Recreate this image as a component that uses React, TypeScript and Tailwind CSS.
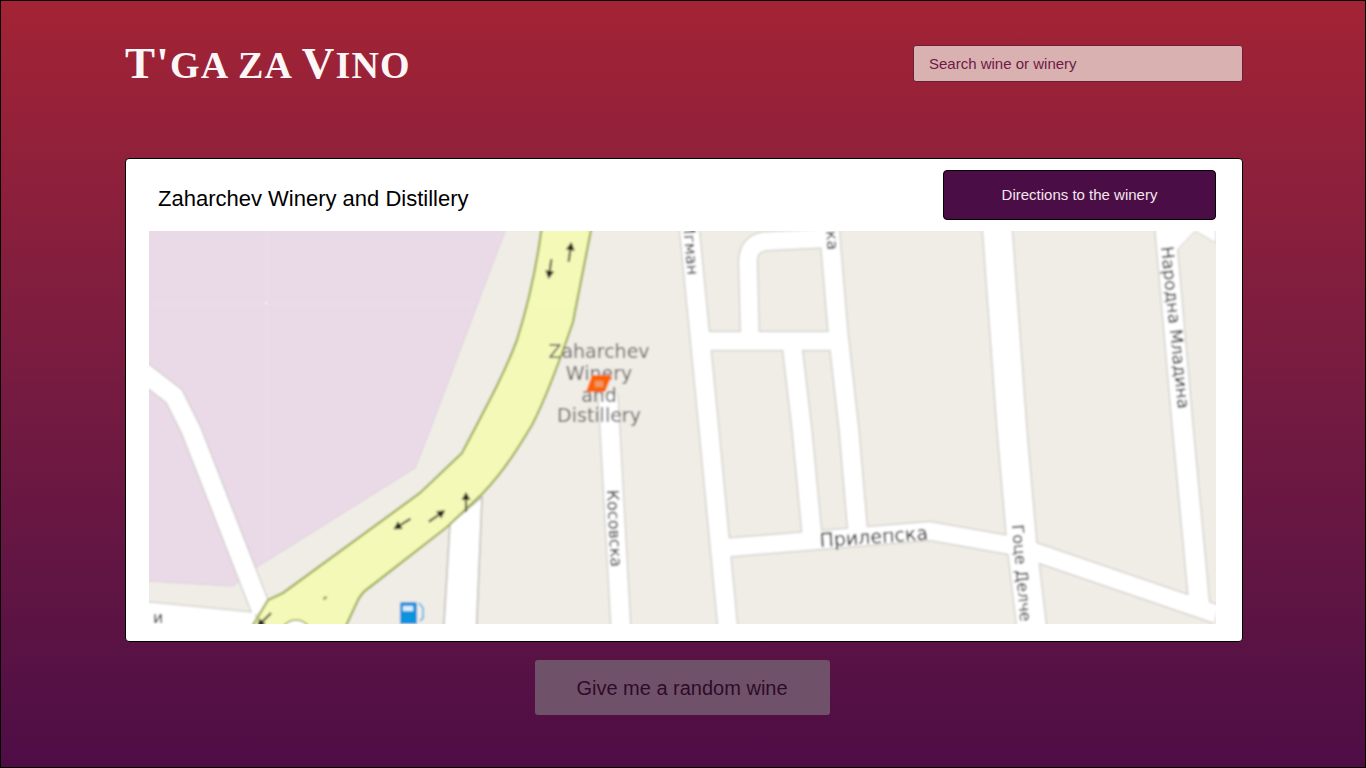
const mapFont = '"DejaVu Sans", sans-serif';

function Road({ d, w }: { d: string; w: number }) {
  return <path d={d} fill="none" stroke="#c4c2bd" strokeWidth={w + 2} strokeLinejoin="round" />;
}

function RoadFill({ d, w }: { d: string; w: number }) {
  return <path d={d} fill="none" stroke="#ffffff" strokeWidth={w} strokeLinejoin="round" />;
}

function Arrow({ x, y, angle }: { x: number; y: number; angle: number }) {
  // points up by default, rotated round its middle
  return (
    <g transform={`translate(${x} ${y}) rotate(${angle})`}>
      <path d="M0 10 L0 -3" stroke="#55593a" strokeWidth={2.2} fill="none" />
      <path d="M-4.5 -2 L0 -10 L4.5 -2 Z" fill="#26281a" />
    </g>
  );
}

const roads: { d: string; w: number }[] = [
  { d: 'M135 366 L174 396 L191 430 L262 612', w: 19 },
  { d: 'M608 395 L610 430 L621 630', w: 19 },
  { d: 'M689 225 L709 430 L728 630', w: 19 },
  { d: 'M705 341 L845 341', w: 18 },
  { d: 'M750 341 L748 262 Q748 241 770 241 L832 238', w: 18 },
  { d: 'M829 225 L838 332 L849 430 L858 535', w: 19 },
  { d: 'M792 345 L802 430 L812 535', w: 19 },
  { d: 'M722 548 L930 531 L1020 547 L1216 614', w: 18 },
  { d: 'M997 225 L1012 430 L1022 545 L1032 630', w: 29 },
  { d: 'M1165 225 L1183 430 L1200 612', w: 20 },
];

function WineryMap() {
  return (
    <svg viewBox="149 231 1067 393" className="block w-full h-[393px]">
      <defs>
        <filter id="tile" x="-2%" y="-2%" width="104%" height="104%">
          <feGaussianBlur stdDeviation="0.85" />
        </filter>
      </defs>
      <g filter="url(#tile)">
        <rect x="130" y="215" width="1110" height="425" fill="#f0ede6" />
        <path d="M130 215 L511 215 L428 435 L415 468 L257 567 L233 586 L130 580 Z" fill="#eadae8" stroke="#dccfd8" />

        {roads.map((r) => <Road key={r.d} d={r.d} w={r.w} />)}
        <path d="M130 600 L252 612 L275 640 L130 640 Z" fill="#ffffff" stroke="#c4c2bd" />
        <path d="M450 524 L482 497 L476 640 L443 640 Z" fill="#ffffff" stroke="#bdbbb6" strokeWidth={1.5} />
        <path d="M1177 250 L1195 231 L1216 243 L1216 215 L1160 215 Z" fill="#ffffff" stroke="#cfcdc8" />
        {roads.map((r) => <RoadFill key={r.d} d={r.d} w={r.w} />)}

        {/* primary road */}
        <path
          d="M542 225 C537 265 528 305 517 340 C505 372 490 400 462 453 L420 493 L283 593 L268 600 L250 630 L344 630 L358 600 C362 592 366 590 370 587 L447 527 L483 493 C505 470 520 445 532 425 C545 400 560 360 573 322 L592 225 Z"
          fill="#f5f9b8"
          stroke="#9aab4e"
          strokeWidth={2.2}
        />
        <ellipse cx="296" cy="634" rx="15" ry="14" fill="#ffffff" stroke="#9aab4e" strokeWidth={1.5} />

        <Arrow x={570} y={252} angle={8} />
        <Arrow x={550} y={269} angle={188} />
        <Arrow x={402} y={524} angle={238} />
        <Arrow x={437} y={516} angle={55} />
        <Arrow x={466} y={502} angle={0} />
        <Arrow x={264} y={620} angle={225} />
        <ellipse cx="325" cy="598" rx="2.5" ry="1.5" fill="#9aa85a" transform="rotate(-40 325 598)" />

        {/* fuel */}
        <path d="M400 604 Q400 602 402 602 L415 602 Q417 602 417 604 L417 624 L400 624 Z" fill="#0f92dd" />
        <rect x="403" y="606" width="10" height="5" fill="#ffffff" opacity="0.85" />
        <path d="M419 603 L423 608 L423 618 L420 621" fill="none" stroke="#5cb8ea" strokeWidth={2} />

        <g fontFamily={mapFont} fontSize={19} fill="#666666" textAnchor="middle">
          <text x="599" y="358">Zaharchev</text>
          <text x="599" y="380">Winery</text>
          <text x="599" y="402">and</text>
          <text x="599" y="422">Distillery</text>
        </g>
        <path d="M592 375 L612 375 L605 392 L586 392 Z" fill="#fb6400" />
        <rect x="595" y="381" width="8" height="6" fill="#ee9a66" />

        <g fontFamily={mapFont} fontSize={16} fill="#222222">
          <text transform="translate(683 223) rotate(85)">Игман</text>
          <text transform="translate(826 231) rotate(85)">ка</text>
          <text transform="translate(1161 247) rotate(84)" fontSize={17}>Народна Младина</text>
          <text transform="translate(607 490) rotate(87)">Косовска</text>
          <text transform="translate(820 547) rotate(-4)" fontSize={19}>Прилепска</text>
          <text transform="translate(1012 525) rotate(85)">Гоце Делче</text>
          <text x="153" y="623">и</text>
        </g>

        {/* tile seams */}
        <path d="M149 304 L1216 304 M267 231 L267 624 M745 231 L745 624" stroke="#ffffff" strokeOpacity={0.07} />
        <circle cx="266" cy="303" r="1" fill="#ffffff" />
      </g>
    </svg>
  );
}

export default function App() {
  return (
    <div className="h-[768px] border border-black bg-gradient-to-b from-[#a32334] to-[#4d0d45] font-['Liberation_Sans',Arial,sans-serif] overflow-hidden">
      <header className="flex items-start justify-between pl-[124px] pr-[122px] pt-[44px] h-[157px]">
        <h1 className="-mt-[1px] font-['Liberation_Serif',serif] font-bold uppercase leading-[38px] text-[#fdf6f6] text-[38px] tracking-[1.2px]">
          <span className="text-[45px]">T'</span>ga za <span className="text-[45px]">V</span>ino
        </h1>
        <input
          readOnly
          placeholder="Search wine or winery"
          className="w-[330px] h-[37px] px-[15px] rounded-[3px] border border-[#6d1d3a] bg-[#d9b1b1] text-[15px] placeholder:text-[#6d1a44] outline-none"
        />
      </header>

      <main className="ml-[124px] mr-[122px] h-[484px] rounded-[4px] border border-black bg-white pt-[11px] pl-[23px] pr-[26px]">
        <div className="flex items-center justify-between h-[50px] mb-[11px]">
          <h2 className="pl-[9px] pt-[6px] text-[22px] text-black">Zaharchev Winery and Distillery</h2>
          <button className="w-[273px] h-[50px] pt-[1px] rounded-[4px] border border-black bg-[#4a0d45] text-[15px] text-[#f4e6f0]">
            Directions to the winery
          </button>
        </div>
        <WineryMap />
      </main>

      <div className="flex justify-center pt-[18px] pr-[2px]">
        <button className="w-[295px] h-[55px] rounded-[3px] bg-[#6f5269] text-[20px] text-[#2e0b29]">
          Give me a random wine
        </button>
      </div>
    </div>
  );
}
